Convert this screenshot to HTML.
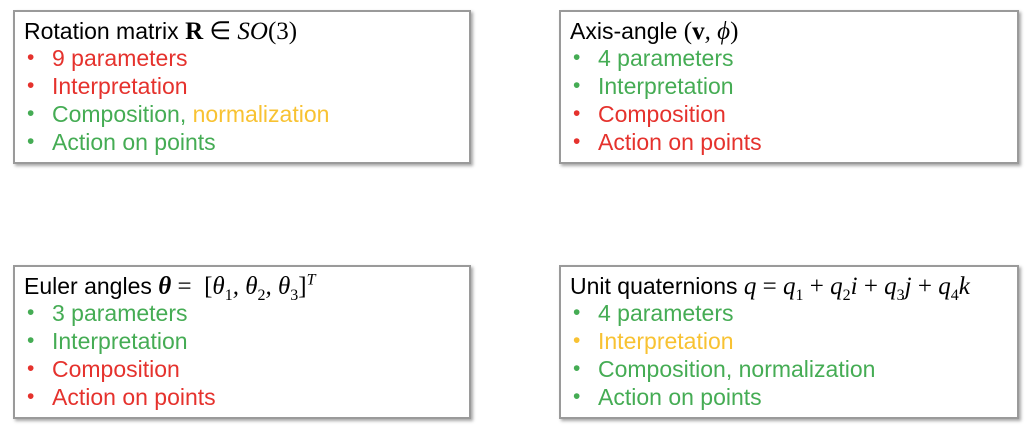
<!DOCTYPE html>
<html><head><style>
body{margin:0;width:1036px;height:434px;background:#fff;position:relative;overflow:hidden;font-family:"Liberation Sans",sans-serif;}
.b{position:absolute;width:458px;height:154px;border:2px solid #9a9a9a;box-shadow:2px 2px 3px rgba(0,0,0,.35);background:#fff;box-sizing:border-box;}
.t{position:absolute;left:9px;top:5px;font-size:23px;line-height:28px;color:#000;white-space:nowrap;}
.m{font-family:"Liberation Serif",serif;font-style:italic;font-size:25px;}
.m .u{font-style:normal}
ul{list-style:none;margin:0;padding:0;position:absolute;left:13px;top:32px;font-size:23px;line-height:28px;}
li{position:relative;padding-left:24px;white-space:nowrap;}
li:before{content:"•";position:absolute;left:-1px;font-size:21px;}
.r{color:#e5322d}.g{color:#45ac54}.y{color:#f8c232}
sub,sup{font-size:16px;line-height:0}
</style></head><body>
<div class="b" style="left:13px;top:10px">
<div class="t">Rotation matrix <span class="m"><b class="u">R</b> <span class="u">∈</span> <i>SO</i><span class="u">(3)</span></span></div>
<ul><li class="r">9 parameters</li><li class="r">Interpretation</li><li class="g">Composition, <span class="y">normalization</span></li><li class="g">Action on points</li></ul></div>
<div class="b" style="left:559px;top:10px;width:460px">
<div class="t">Axis-angle <span class="m"><span class="u">(</span><b class="u">v</b>, ϕ<span class="u">)</span></span></div>
<ul><li class="g">4 parameters</li><li class="g">Interpretation</li><li class="r">Composition</li><li class="r">Action on points</li></ul></div>
<div class="b" style="left:13px;top:265px">
<div class="t">Euler angles <span class="m"><b>θ</b> <span class="u">=</span>&nbsp; <span class="u">[</span>θ<sub class="u">1</sub>, θ<sub class="u">2</sub>, θ<sub class="u">3</sub><span class="u">]</span><sup>T</sup></span></div>
<ul><li class="g">3 parameters</li><li class="g">Interpretation</li><li class="r">Composition</li><li class="r">Action on points</li></ul></div>
<div class="b" style="left:559px;top:265px;width:460px">
<div class="t">Unit quaternions <span class="m">q <span class="u">=</span> q<sub class="u">1</sub> <span class="u">+</span> q<sub class="u">2</sub>i <span class="u">+</span> q<sub class="u">3</sub>j <span class="u">+</span> q<sub class="u">4</sub>k</span></div>
<ul><li class="g">4 parameters</li><li class="y">Interpretation</li><li class="g">Composition, normalization</li><li class="g">Action on points</li></ul></div>
</body></html>
